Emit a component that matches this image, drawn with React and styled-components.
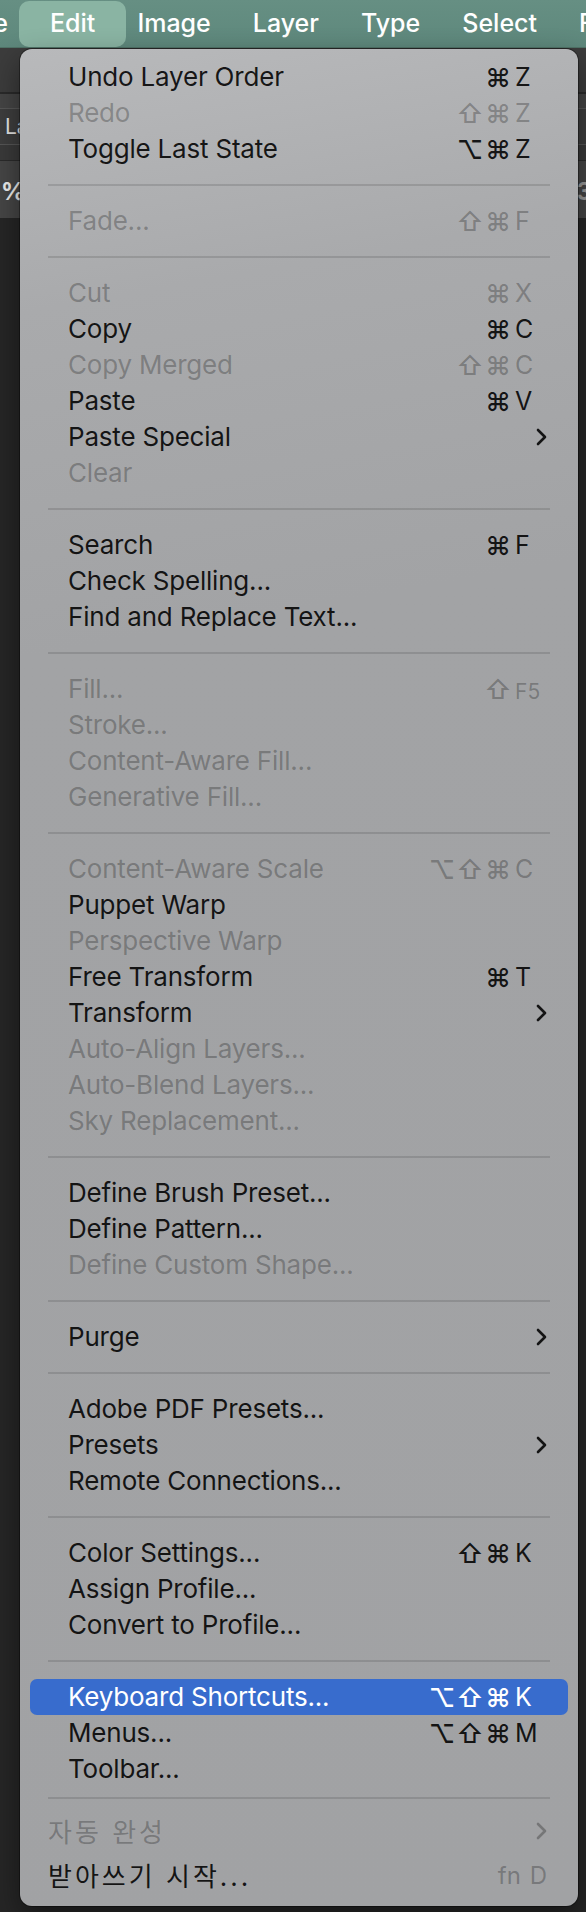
import React from 'react';
import styled, { createGlobalStyle, css } from 'styled-components';

const Global = createGlobalStyle`
  html, body { margin: 0; padding: 0; background: #262626; }
  body {
    width: 586px; height: 1912px; overflow: hidden;
    font-family: Inter, "Noto Sans CJK KR", sans-serif;
    -webkit-font-smoothing: antialiased;
  }
  * { box-sizing: border-box; }
`;

const Page = styled.div`
  width: 586px;
  height: 1912px;
  display: flex;
  flex-direction: column;
  background: #262626;
`;

const MenuBar = styled.div`
  height: 48px;
  flex: none;
  display: flex;
  align-items: center;
  background: linear-gradient(180deg, #668f83 0%, #5e887c 100%);
  border-bottom: 1px solid #4f7367;
  overflow: hidden;
  white-space: nowrap;
`;

const BarItem = styled.div`
  flex: none;
  height: 46px;
  display: flex;
  align-items: center;
  padding: 0 21px 2px;
  font-size: 25px;
  font-weight: 500;
  color: #ffffff;
  ${(p) => p.$lead && css`margin-left: -55px;`}
  ${(p) =>
    p.$active &&
    css`
      background: #8ab4a3;
      border-radius: 10px;
      padding: 0 31px 2px;
      margin: 0 -10px;
    `}
`;

const Workspace = styled.div`
  position: relative;
  flex: 1;
  display: flex;
  flex-direction: column;
`;

const OptionsBar = styled.div`
  height: 46px;
  background: #3c3c3c;
  border-bottom: 2px solid #2a2a2a;
`;

const ThinBand = styled.div`
  height: 15px;
  background: #454545;
  border-bottom: 1px solid #575757;
`;

const PanelRow = styled.div`
  height: 36px;
  background: #3e3e3e;
  border-bottom: 1px solid #565656;
  display: flex;
  align-items: center;
  padding-left: 5px;
  color: #e6e6e6;
  font-size: 21px;
`;

const GapBand = styled.div`
  height: 16px;
  background: #3a3a3a;
  border-bottom: 1px solid #2b2b2b;
`;

const DocRow = styled.div`
  height: 57px;
  background: #464646;
  display: flex;
  align-items: center;
  justify-content: space-between;
  padding-left: 1px;
  padding-top: 4px;
  color: #eeeeee;
  font-size: 24px;
  font-weight: 700;
`;

const DocFaint = styled.span`
  color: #9a9a9a;
  margin-right: -6px;
`;

const Canvas = styled.div`
  flex: 1;
  background: #262626;
`;

const Dropdown = styled.div`
  position: absolute;
  top: 1px;
  left: 20px;
  width: 558px;
  padding: 10px 0 9px;
  border-radius: 12px;
  background: linear-gradient(170deg, #b8b9bb 0px, #a9aaac 260px, #a2a3a5 600px, #a1a2a4 100%);
  box-shadow: 0 0 0 1px rgba(0, 0, 0, 0.35), 0 12px 30px rgba(0, 0, 0, 0.45);
`;

const Row = styled.div`
  height: ${(p) => (p.$tall ? 44 : 36)}px;
  margin: 0 10px;
  padding: 0 21px 0 ${(p) => (p.$tall ? 18 : 38)}px;
  display: flex;
  align-items: center;
  border-radius: 7px;
  font-size: 26px;
  letter-spacing: ${(p) => (p.$tall ? '3px' : '-0.2px')};
  white-space: nowrap;
  color: ${(p) => (p.$disabled ? 'rgba(0,0,0,0.27)' : 'rgba(0,0,0,0.88)')};
  ${(p) =>
    p.$active &&
    css`
      background: #386ccd;
      color: #ffffff;
    `}
`;

const Label = styled.span`
  flex: 1;
  padding-bottom: 2px;
`;

const Shortcut = styled.span`
  display: flex;
  align-items: center;
  letter-spacing: 0;
`;

const ModCell = styled.span`
  width: 28px;
  text-align: center;
  font-family: Inter, "DejaVu Sans", sans-serif;
  font-size: 26px;
  font-weight: 500;
`;

const KeyCell = styled.span`
  width: 35px;
  padding-left: 3px;
  text-align: left;
  font-size: ${(p) => (p.$small ? 21 : 25)}px;
  padding-top: ${(p) => (p.$small ? 4 : 0)}px;
`;

const FnKey = styled.span`
  color: rgba(0, 0, 0, 0.27);
  font-size: 24px;
  letter-spacing: 0;
  word-spacing: 2px;
`;

const Chevron = styled.svg`
  width: 11px;
  height: 18px;
  flex: none;
`;

const Separator = styled.div`
  height: ${(p) => (p.$small ? 22 : 36)}px;
  display: flex;
  align-items: center;
  padding: 0 28px;
  &::after {
    content: '';
    flex: 1;
    height: 2px;
    background: rgba(0, 0, 0, 0.12);
  }
`;

const Arrow = () => (
  <Chevron viewBox="0 0 11 18">
    <path d="M2 2 L9 9 L2 16" fill="none" stroke="currentColor" strokeWidth="2.6" strokeLinecap="round" strokeLinejoin="round" />
  </Chevron>
);

const sections = [
  [
    { label: 'Undo Layer Order', mods: ['⌘'], key: 'Z' },
    { label: 'Redo', disabled: true, mods: ['⇧', '⌘'], key: 'Z' },
    { label: 'Toggle Last State', mods: ['⌥', '⌘'], key: 'Z' },
  ],
  [{ label: 'Fade...', disabled: true, mods: ['⇧', '⌘'], key: 'F' }],
  [
    { label: 'Cut', disabled: true, mods: ['⌘'], key: 'X' },
    { label: 'Copy', mods: ['⌘'], key: 'C' },
    { label: 'Copy Merged', disabled: true, mods: ['⇧', '⌘'], key: 'C' },
    { label: 'Paste', mods: ['⌘'], key: 'V' },
    { label: 'Paste Special', sub: true },
    { label: 'Clear', disabled: true },
  ],
  [
    { label: 'Search', mods: ['⌘'], key: 'F' },
    { label: 'Check Spelling...' },
    { label: 'Find and Replace Text...' },
  ],
  [
    { label: 'Fill...', disabled: true, mods: ['⇧'], key: 'F5', small: true },
    { label: 'Stroke...', disabled: true },
    { label: 'Content-Aware Fill...', disabled: true },
    { label: 'Generative Fill...', disabled: true },
  ],
  [
    { label: 'Content-Aware Scale', disabled: true, mods: ['⌥', '⇧', '⌘'], key: 'C' },
    { label: 'Puppet Warp' },
    { label: 'Perspective Warp', disabled: true },
    { label: 'Free Transform', mods: ['⌘'], key: 'T' },
    { label: 'Transform', sub: true },
    { label: 'Auto-Align Layers...', disabled: true },
    { label: 'Auto-Blend Layers...', disabled: true },
    { label: 'Sky Replacement...', disabled: true },
  ],
  [
    { label: 'Define Brush Preset...' },
    { label: 'Define Pattern...' },
    { label: 'Define Custom Shape...', disabled: true },
  ],
  [{ label: 'Purge', sub: true }],
  [
    { label: 'Adobe PDF Presets...' },
    { label: 'Presets', sub: true },
    { label: 'Remote Connections...' },
  ],
  [
    { label: 'Color Settings...', mods: ['⇧', '⌘'], key: 'K' },
    { label: 'Assign Profile...' },
    { label: 'Convert to Profile...' },
  ],
  [
    { label: 'Keyboard Shortcuts...', active: true, mods: ['⌥', '⇧', '⌘'], key: 'K' },
    { label: 'Menus...', mods: ['⌥', '⇧', '⌘'], key: 'M' },
    { label: 'Toolbar...' },
  ],
];

const MenuRow = ({ item }) => (
  <Row $disabled={item.disabled} $active={item.active}>
    <Label>{item.label}</Label>
    {item.key && (
      <Shortcut>
        {item.mods.map((m, i) => (
          <ModCell key={i}>{m}</ModCell>
        ))}
        <KeyCell $small={item.small}>{item.key}</KeyCell>
      </Shortcut>
    )}
    {item.sub && <Arrow />}
  </Row>
);

const barItems = ['File', 'Edit', 'Image', 'Layer', 'Type', 'Select', 'Filter'];

export default function App() {
  return (
    <Page>
      <Global />
      <MenuBar>
        {barItems.map((t, i) => (
          <BarItem key={t} $lead={i === 0} $active={t === 'Edit'}>
            {t}
          </BarItem>
        ))}
      </MenuBar>
      <Workspace>
        <OptionsBar />
        <ThinBand />
        <PanelRow>La</PanelRow>
        <GapBand />
        <DocRow>
          <span>%</span>
          <DocFaint>3</DocFaint>
        </DocRow>
        <Canvas />
        <Dropdown>
          {sections.map((sec, si) => (
            <React.Fragment key={si}>
              {si > 0 && <Separator />}
              {sec.map((item) => (
                <MenuRow key={item.label} item={item} />
              ))}
            </React.Fragment>
          ))}
          <Separator $small />
          <Row $tall $disabled>
            <Label>자동 완성</Label>
            <Arrow />
          </Row>
          <Row $tall>
            <Label>받아쓰기 시작...</Label>
            <FnKey>fn D</FnKey>
          </Row>
        </Dropdown>
      </Workspace>
    </Page>
  );
}
